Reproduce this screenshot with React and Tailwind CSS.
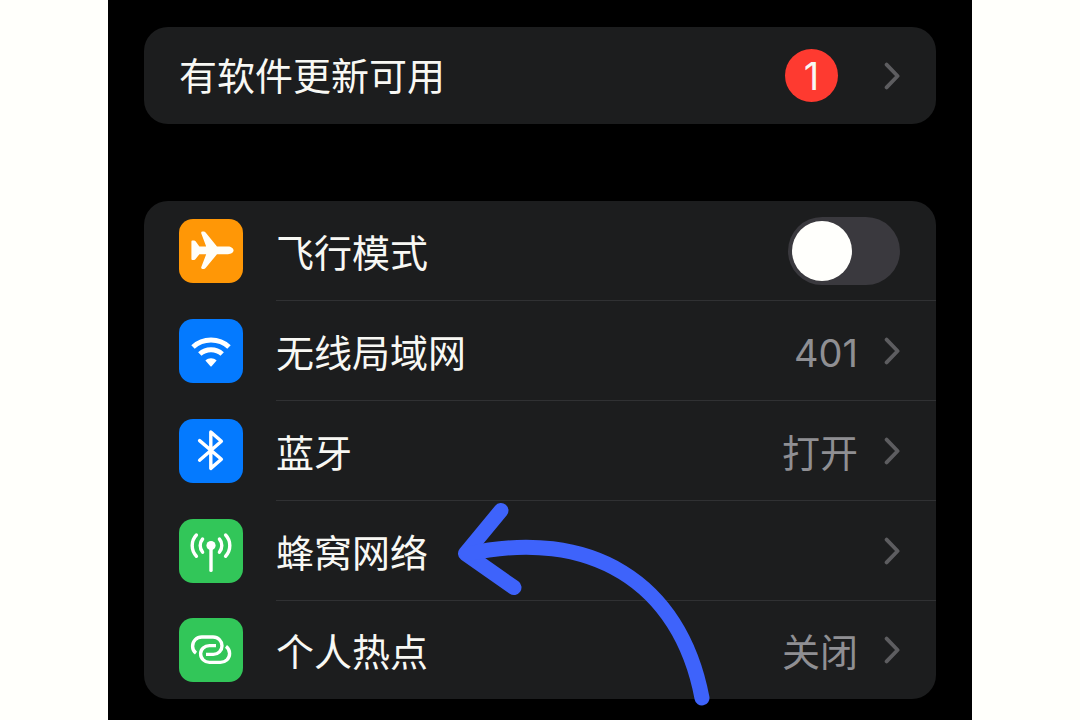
import React, { useState } from 'react';

// --- ícones ---
function AirplaneIcon() {
  return (
    <svg viewBox="0 0 64 64" className="size-16" fill="#fffef8" aria-hidden="true">
      <path d="M12.4 22.5Q12.4 21.5 13.4 21.5H15Q16 21.5 16.6 22.3L20.4 27.4H27.2L22.3 14.4Q21.8 12.6 23.4 12.6H24.8Q25.8 12.6 26.6 13.6L38 27.4H49C52 27.4 54.6 29.2 54.6 31.3C54.6 33.4 52 35.2 49 35.2H38L26.6 48.9Q25.8 49.9 24.8 49.9H23.4Q21.8 49.9 22.3 48.1L27.2 35.2H20.4L16.6 40.1Q16 41 15 41H13.4Q12.4 41 12.4 40Z" />
    </svg>
  );
}

function WifiIcon() {
  return (
    <svg viewBox="0 0 64 64" className="size-16" fill="none" stroke="#fff" strokeWidth="5" aria-hidden="true">
      <path d="M14 28C24 18.6 40 18.6 50 28" />
      <path d="M20.8 35C27 29.4 37 29.4 43.2 35" />
      <path d="M26.4 41.4C29.6 38.4 34.4 38.4 37.6 41.4L32.6 47.2Q32 47.8 31.4 47.2Z" fill="#fff" stroke="none" />
    </svg>
  );
}

function BluetoothIcon() {
  return (
    <svg
      viewBox="0 0 64 64"
      className="size-16"
      fill="none"
      stroke="#fff"
      strokeWidth="3.4"
      strokeLinecap="round"
      strokeLinejoin="round"
      aria-hidden="true"
    >
      <path d="M20.6 21.6L42.4 40.2L31.8 49.4V13L42.4 22.2L20.6 41.2" />
    </svg>
  );
}

function CellularIcon() {
  return (
    <svg
      viewBox="0 0 64 64"
      className="size-16"
      fill="none"
      stroke="#fff"
      strokeWidth="3.4"
      strokeLinecap="round"
      aria-hidden="true"
    >
      <circle cx="32" cy="26.6" r="4.6" fill="#fff" stroke="none" />
      <path d="M32 28V51.4" />
      <path d="M23.6 20C20.4 23.6 20.4 29.6 23.6 33.2" />
      <path d="M40.4 20C43.6 23.6 43.6 29.6 40.4 33.2" />
      <path d="M17.4 16C11.8 21.8 11.8 31.4 17.4 37.2" />
      <path d="M46.6 16C52.2 21.8 52.2 31.4 46.6 37.2" />
    </svg>
  );
}

function HotspotIcon() {
  return (
    <svg
      viewBox="0 0 64 64"
      className="size-16"
      fill="none"
      stroke="#fff"
      strokeWidth="3.4"
      strokeLinecap="butt"
      aria-hidden="true"
    >
      <path d="M17 35.2C14.8 33.6 13.6 31 13.6 28.2C13.6 23 17.6 19 22.8 19H34C39.2 19 43 23 43 27.8C43 32.6 39.2 36.4 34.4 36.4H27" />
      <path d="M37 27.6H30.4C25.6 27.6 21.6 31.2 21.6 35.8C21.6 40.6 25.6 44.4 30.4 44.4H41.4C46.6 44.4 50.6 40.6 50.6 35.6C50.6 32.6 49.2 30 47 28.4" />
    </svg>
  );
}

function Chevron() {
  return (
    <svg
      viewBox="0 0 16 28"
      className="h-7 w-4 shrink-0"
      fill="none"
      stroke="#5d5d60"
      strokeWidth="3.8"
      strokeLinecap="round"
      strokeLinejoin="round"
      aria-hidden="true"
    >
      <path d="M2.6 2.6L13.6 14L2.6 25.4" />
    </svg>
  );
}

// seta azul que aponta para a rede celular
function PointerArrow() {
  return (
    <svg
      viewBox="0 0 262 210"
      className="pointer-events-none absolute top-[300px] left-[310px] h-[210px] w-[262px]"
      fill="none"
      stroke="#3e63fb"
      strokeWidth="15"
      strokeLinecap="round"
      strokeLinejoin="round"
      aria-hidden="true"
    >
      <path d="M47 9.5L11.5 52.5L60 86.5" />
      <path d="M13 53C136 26 226 81 248 197" />
    </svg>
  );
}

const rows = [
  { id: 'airplane', label: '飞行模式', color: 'bg-[#ff9706]', Icon: AirplaneIcon, toggle: true },
  { id: 'wifi', label: '无线局域网', color: 'bg-[#047aff]', Icon: WifiIcon, value: '401' },
  { id: 'bluetooth', label: '蓝牙', color: 'bg-[#047aff]', Icon: BluetoothIcon, value: '打开' },
  { id: 'cellular', label: '蜂窝网络', color: 'bg-[#32c659]', Icon: CellularIcon },
  { id: 'hotspot', label: '个人热点', color: 'bg-[#32c659]', Icon: HotspotIcon, value: '关闭' },
];

function SettingRow({ row, isLast, checked, onToggle }) {
  const { label, color, Icon, value, toggle } = row;
  const Tag = toggle ? 'label' : 'button';

  return (
    <Tag className="flex w-full cursor-pointer items-stretch gap-[33px] pl-[35px] text-left">
      <span className={`size-16 shrink-0 self-center overflow-hidden rounded-[14px] ${color}`}>
        <Icon />
      </span>
      <span
        className={`flex flex-1 items-center justify-between pr-9 ${
          isLast ? 'min-h-[98px]' : 'min-h-[100px] border-b border-[#303133]'
        }`}
      >
        <span className="pt-1">{label}</span>
        {toggle ? (
          <input
            type="checkbox"
            role="switch"
            checked={checked}
            onChange={onToggle}
            className="flex h-[68px] w-28 cursor-pointer appearance-none items-center rounded-full bg-[#3a393e] px-1 before:size-[60px] before:rounded-full before:bg-[#fffffc] checked:justify-end checked:bg-[#32c659]"
          />
        ) : (
          <span className="flex items-center gap-[26px]">
            {value && <span className="pt-1 text-[#8f8f93]">{value}</span>}
            <Chevron />
          </span>
        )}
      </span>
    </Tag>
  );
}

function App() {
  const [airplaneMode, setAirplaneMode] = useState(false);

  return (
    <div className="min-h-screen bg-[#fffffb]">
      <main className="mx-auto flex min-h-screen w-4/5 flex-col gap-[77px] bg-black px-9 pt-[27px] pb-[21px] font-[Inter,'Noto_Sans_CJK_SC',sans-serif] text-[38px] leading-[48px] text-[#f8f8f4]">
        <button className="flex min-h-[97px] w-full cursor-pointer items-center justify-between rounded-3xl bg-[#1c1d1e] pr-9 pl-[35px] text-left">
          <span>有软件更新可用</span>
          <span className="flex items-center gap-[46px]">
            <span className="flex size-[53px] items-center justify-center rounded-full bg-[#fe3a30]">1</span>
            <Chevron />
          </span>
        </button>

        <section className="relative rounded-3xl bg-[#1c1d1e]">
          {rows.map((row, index) => (
            <SettingRow
              key={row.id}
              row={row}
              isLast={index === rows.length - 1}
              checked={airplaneMode}
              onToggle={() => setAirplaneMode((prev) => !prev)}
            />
          ))}
          <PointerArrow />
        </section>
      </main>
    </div>
  );
}

export default App;
